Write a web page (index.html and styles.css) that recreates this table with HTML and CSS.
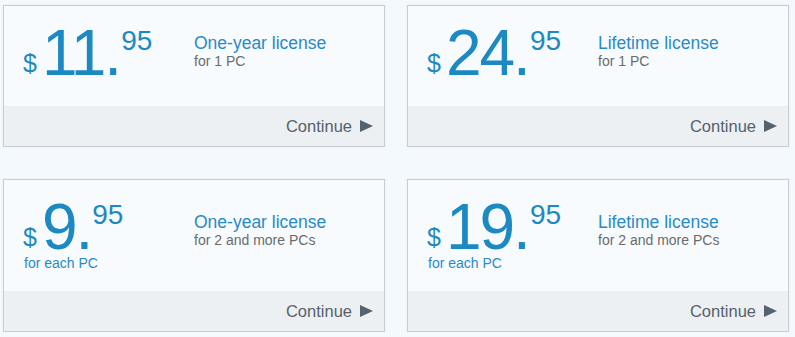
FILE: index.html
```html
<!DOCTYPE html>
<html lang="en">
<head>
<meta charset="utf-8">
<title>Licenses</title>
<link rel="stylesheet" href="styles.css">
</head>
<body>
<div class="grid">
  <div class="card">
    <div class="card-body">
      <div class="price">
        <div class="amount"><span class="cur">$</span><span class="whole">11.</span><span class="cents">95</span></div>
      </div>
      <div class="desc">
        <div class="title">One-year license</div>
        <div class="sub">for 1 PC</div>
      </div>
    </div>
    <div class="card-foot"><span class="cont">Continue</span><svg class="arrow" width="13" height="12" viewBox="0 0 13 12"><path d="M0 0 L13 6 L0 12 Z" fill="#56636e"/></svg></div>
  </div>
  <div class="card">
    <div class="card-body">
      <div class="price">
        <div class="amount"><span class="cur">$</span><span class="whole">24.</span><span class="cents">95</span></div>
      </div>
      <div class="desc">
        <div class="title">Lifetime license</div>
        <div class="sub">for 1 PC</div>
      </div>
    </div>
    <div class="card-foot"><span class="cont">Continue</span><svg class="arrow" width="13" height="12" viewBox="0 0 13 12"><path d="M0 0 L13 6 L0 12 Z" fill="#56636e"/></svg></div>
  </div>
  <div class="card">
    <div class="card-body">
      <div class="price">
        <div class="amount"><span class="cur">$</span><span class="whole">9.</span><span class="cents">95</span></div>
        <div class="each">for each PC</div>
      </div>
      <div class="desc">
        <div class="title">One-year license</div>
        <div class="sub">for 2 and more PCs</div>
      </div>
    </div>
    <div class="card-foot"><span class="cont">Continue</span><svg class="arrow" width="13" height="12" viewBox="0 0 13 12"><path d="M0 0 L13 6 L0 12 Z" fill="#56636e"/></svg></div>
  </div>
  <div class="card">
    <div class="card-body">
      <div class="price">
        <div class="amount"><span class="cur">$</span><span class="whole">19.</span><span class="cents">95</span></div>
        <div class="each">for each PC</div>
      </div>
      <div class="desc">
        <div class="title">Lifetime license</div>
        <div class="sub">for 2 and more PCs</div>
      </div>
    </div>
    <div class="card-foot"><span class="cont">Continue</span><svg class="arrow" width="13" height="12" viewBox="0 0 13 12"><path d="M0 0 L13 6 L0 12 Z" fill="#56636e"/></svg></div>
  </div>
</div>
</body>
</html>
```

FILE: styles.css
```css
html, body {
  margin: 0;
  padding: 0;
  background: #f3f9fc;
  font-family: "Liberation Sans", Arial, sans-serif;
}

.grid {
  display: grid;
  grid-template-columns: 382px 382px;
  column-gap: 22px;
  row-gap: 32px;
  padding: 5px 0 0 3px;
  align-items: start;
}

.card {
  border: 1px solid #c9cdd1;
  box-shadow: 0 0 2px rgba(0, 0, 0, 0.08);
  background: #f7fbfe;
}

.card-body {
  display: flex;
  align-items: center;
  padding: 11px 0 17px 19px;
}

.price {
  width: 171px;
  flex: none;
  color: #1d89c2;
}

.amount {
  height: 72px;
  line-height: 72px;
  white-space: nowrap;
}

.cur {
  font-size: 25px;
  line-height: 1;
  vertical-align: 3px;
  margin-right: 5px;
}

.whole {
  font-size: 64px;
  letter-spacing: -2px;
}

.cents {
  font-size: 28px;
  line-height: 1;
  vertical-align: 25px;
  margin-left: 1px;
}

.each {
  font-size: 14px;
  line-height: 14px;
  margin: -7px 0 4px 1px;
  color: #2a8ac4;
}

.desc {
  margin-bottom: 4px;
}

.title {
  font-size: 17.5px;
  line-height: 19px;
  color: #2a8ac6;
}

.sub {
  font-size: 14px;
  line-height: 16px;
  color: #6b6b6b;
}

.card-foot {
  height: 40px;
  background: #ecf0f3;
  display: flex;
  justify-content: flex-end;
  align-items: center;
  padding-right: 11px;
}

.cont {
  font-size: 16.5px;
  line-height: 40px;
  color: #56616b;
}

.arrow {
  margin-left: 8px;
  display: block;
}
```
